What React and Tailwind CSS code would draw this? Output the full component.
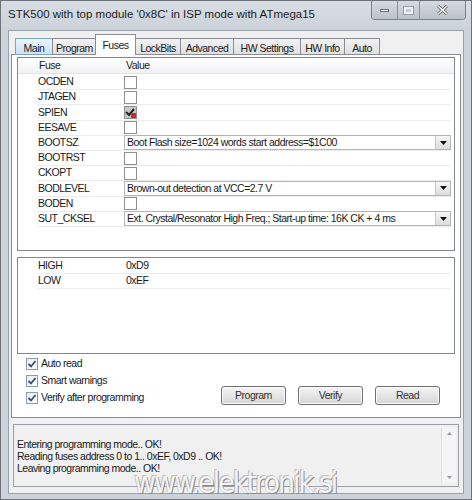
import React from "react";

const fuses = [
  { name: "OCDEN", type: "check" },
  { name: "JTAGEN", type: "check" },
  { name: "SPIEN", type: "check", checked: true, locked: true },
  { name: "EESAVE", type: "check" },
  { name: "BOOTSZ", type: "select", value: "Boot Flash size=1024 words start address=$1C00" },
  { name: "BOOTRST", type: "check" },
  { name: "CKOPT", type: "check" },
  { name: "BODLEVEL", type: "select", value: "Brown-out detection at VCC=2.7 V" },
  { name: "BODEN", type: "check" },
  { name: "SUT_CKSEL", type: "select", value: "Ext. Crystal/Resonator High Freq.; Start-up time: 16K CK + 4 ms" },
];

const tabs = [
  { label: "Main", w: "w-[38px]" },
  { label: "Program", w: "w-[45px]" },
  { label: "Fuses", w: "w-[41px]" },
  { label: "LockBits", w: "w-[46px]" },
  { label: "Advanced", w: "w-[54px]" },
  { label: "HW Settings", w: "w-[68px]" },
  { label: "HW Info", w: "w-[45px]" },
  { label: "Auto", w: "w-[36px]" },
];

function FuseCheck({ checked, locked }) {
  return (
    <div
      className={`relative w-[13px] h-[13px] border border-[#8f8f8f] ${checked ? "bg-[#c9c9c9]" : "bg-white"}`}
    >
      {checked && (
        <svg width="13" height="13" viewBox="0 0 13 13" className="absolute -left-px -top-px">
          <path d="M2 6 L5 9 L10 3" stroke="#222" strokeWidth="2" fill="none" />
          {locked && <rect x="7" y="7" width="5" height="5" fill="#d22" />}
        </svg>
      )}
    </div>
  );
}

function Dropdown({ value }) {
  return (
    <div className="flex items-center h-[15px] w-[327px] border border-[#b5b5b5] bg-white">
      <span className="flex-1 pl-[2px] truncate leading-[13px]">{value}</span>
      <div className="w-[15px] h-[13px] flex items-center justify-center bg-gradient-to-b from-[#f7f7f7] to-[#dcdcdc] border-l border-[#c8c8c8]">
        <svg width="7" height="4" viewBox="0 0 7 4">
          <path d="M0 0 L7 0 L3.5 4 Z" fill="#111" />
        </svg>
      </div>
    </div>
  );
}

function SmallCheck({ label }) {
  return (
    <div className="flex items-center gap-[3px] h-[17px]">
      <div className="w-[12px] h-[12px] border border-[#8e9aab] bg-gradient-to-br from-[#e8ecf2] to-white flex items-center justify-center">
        <svg width="10" height="10" viewBox="0 0 10 10">
          <path d="M1.5 5 L4 7.5 L8.5 2" stroke="#3a4f6e" strokeWidth="1.8" fill="none" />
        </svg>
      </div>
      <span>{label}</span>
    </div>
  );
}

function WinButton({ label }) {
  return (
    <button className="w-[65px] h-[19px] rounded-[3px] border border-[#707070] bg-gradient-to-b from-[#f4f4f4] via-[#e6e6e6] to-[#d4d4d4] text-[#333] shadow-[inset_0_0_0_1px_#fcfcfc]">
      {label}
    </button>
  );
}

export default function App() {
  return (
    <div className="relative w-[472px] h-[500px] overflow-hidden bg-[#cdd3da] border border-[#6f737a] font-['Liberation_Sans',Arial,sans-serif] text-[10.5px] tracking-[-0.5px] text-[#1a1a1a]">
      {/* title bar */}
      <div className="flex items-start h-[29px] bg-gradient-to-b from-[#d9dee5] to-[#ccd2d9]">
        <span className="pl-[7px] pt-[5px] text-[11.5px] tracking-normal text-[#1c1c1c]">
          STK500 with top module '0x8C' in ISP mode with ATmega15
        </span>
        <div className="ml-auto mr-[5px] flex h-[19px] border border-t-0 border-[#7c8088] rounded-b-[4px] overflow-hidden">
          <div className="w-[26px] flex items-center justify-center bg-gradient-to-b from-[#d6dbe2] to-[#bcc2ca] border-r border-[#8d9199]">
            <div className="w-[9px] h-[3px] bg-white border border-[#6a6e75]" />
          </div>
          <div className="w-[22px] flex items-center justify-center bg-gradient-to-b from-[#d6dbe2] to-[#bcc2ca] border-r border-[#8d9199]">
            <div className="w-[9px] h-[7px] border-2 border-[#eef0f3] outline outline-1 outline-[#9a9ea5]" />
          </div>
          <div className="w-[45px] flex items-center justify-center bg-gradient-to-b from-[#d6dbe2] to-[#bcc2ca]">
            <svg width="11" height="10" viewBox="0 0 11 10">
              <path d="M1 1 L10 9 M10 1 L1 9" stroke="#555" strokeWidth="3" />
              <path d="M1 1 L10 9 M10 1 L1 9" stroke="#fff" strokeWidth="1.6" />
            </svg>
          </div>
        </div>
      </div>

      {/* client area */}
      <div className="mx-[7px] h-[464px] bg-[#f0f0f0] border border-[#9ba1a8] pt-[3px] px-[2px]">
        {/* tabs */}
        <div className="flex items-end h-[21px] pl-[4px]">
          {tabs.map((t) => (
            <div
              key={t.label}
              className={
                t.label === "Fuses"
                  ? `relative z-10 ${t.w} h-[21px] -mx-[1px] pt-[3px] text-center bg-white border border-b-0 border-[#898c95]`
                  : t.label === "Main"
                  ? `${t.w} h-[17px] pt-[2px] text-center bg-gradient-to-b from-[#eaf5fd] to-[#c9e3f5] border border-[#7fa5c4] -mr-[1px]`
                  : `${t.w} h-[17px] pt-[2px] text-center bg-gradient-to-b from-[#f2f2f2] to-[#e0e0e0] border border-[#898c95] -mr-[1px]`
              }
            >
              {t.label}
            </div>
          ))}
        </div>

        {/* tab page */}
        <div className="h-[364px] -mt-px bg-white border border-[#898c95] px-[5px] pt-[2px] flex flex-col">
          {/* fuse list */}
          <div className="h-[194px] border border-[#828790] flex flex-col">
            <div className="flex h-[16px] bg-gradient-to-b from-white to-[#f1f2f4] border-b border-[#e1e3e6] items-center">
              <span className="pl-[21px] w-[108px]">Fuse</span>
              <span>Value</span>
            </div>
            <div className="pt-[1px]">
              {fuses.map((f) => (
                <div key={f.name} className="flex items-center h-[15.2px] ml-[19px] mr-[3px] border-b border-[#ececec]">
                  <span className="w-[87px] pl-[1px]">{f.name}</span>
                  {f.type === "check" ? <FuseCheck checked={f.checked} locked={f.locked} /> : <Dropdown value={f.value} />}
                </div>
              ))}
            </div>
          </div>

          {/* high/low */}
          <div className="mt-[6px] h-[97px] border border-[#828790]">
            <div className="pt-[1px]">
              {[
                ["HIGH", "0xD9"],
                ["LOW", "0xEF"],
              ].map(([k, v]) => (
                <div key={k} className="flex items-center h-[15px] ml-[19px] mr-[3px] border-b border-[#ececec]">
                  <span className="w-[89px] pl-[1px]">{k}</span>
                  <span>{v}</span>
                </div>
              ))}
            </div>
          </div>

          {/* options + buttons */}
          <div className="flex items-end mt-[1px]">
            <div className="flex flex-col pl-[9px]">
              <SmallCheck label="Auto read" />
              <SmallCheck label="Smart warnings" />
              <SmallCheck label="Verify after programming" />
            </div>
            <div className="ml-auto mr-[15px] mb-[1px] flex gap-[12px]">
              <WinButton label="Program" />
              <WinButton label="Verify" />
              <WinButton label="Read" />
            </div>
          </div>
        </div>

        {/* log */}
        <div className="mt-[6px] mx-[2px] h-[63px] bg-[#f0f0f0] border border-[#9a9ea5] flex">
          <div className="flex-1 pl-[3px] pt-[13px] leading-[12px]">
            <div>Entering programming mode.. OK!</div>
            <div>Reading fuses address 0 to 1.. 0xEF, 0xD9 .. OK!</div>
            <div>Leaving programming mode.. OK!</div>
          </div>
          <div className="w-[15px] my-[3px] mr-[2px] flex flex-col items-center justify-between py-[4px] bg-[#f5f5f5] border-l border-[#e2e2e2]">
            <svg width="5" height="3" viewBox="0 0 5 3"><path d="M0 3 L2.5 0 L5 3 Z" fill="#999" /></svg>
            <svg width="5" height="3" viewBox="0 0 5 3"><path d="M0 0 L2.5 3 L5 0 Z" fill="#999" /></svg>
          </div>
        </div>
      </div>

      {/* watermark */}
      <div className="absolute left-[133px] top-[467px] text-[30px] leading-none tracking-[-2px] text-[#f4f4f4] [text-shadow:1px_1px_0_#8a8a8a,-1px_-1px_0_#bdbdbd] font-['DejaVu_Sans_Condensed',sans-serif] font-light">
        www.elektronik.si
      </div>
    </div>
  );
}
